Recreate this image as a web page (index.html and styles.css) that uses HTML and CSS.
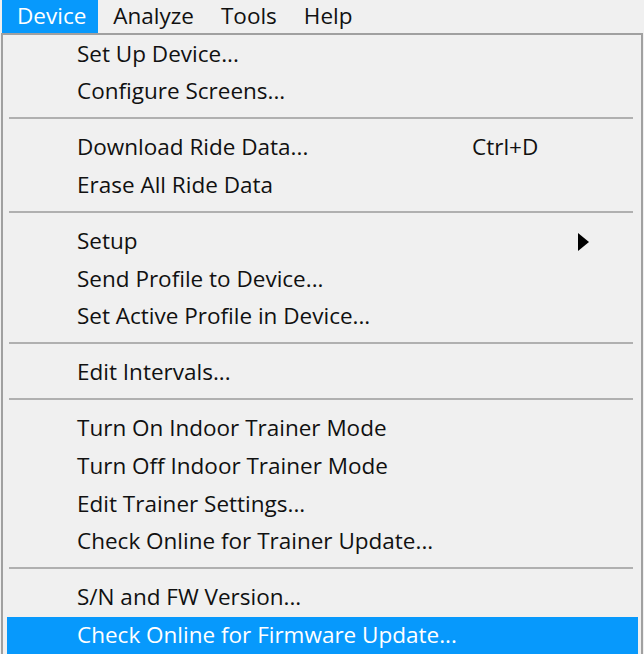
FILE: index.html
```html
<!DOCTYPE html>
<html lang="en">
<head>
  <meta charset="UTF-8" />
  <title>Device menu</title>
  <link rel="stylesheet" href="styles.css">
</head>
<body>

  <!-- Menu bar -->
  <div class="menubar">
    <div class="menubar-item open">Device</div>
    <div class="menubar-item">Analyze</div>
    <div class="menubar-item">Tools</div>
    <div class="menubar-item">Help</div>
  </div>

  <!-- Device dropdown -->
  <div class="menu">
    <div class="item"><span class="label">Set Up Device...</span></div>
    <div class="item"><span class="label">Configure Screens...</span></div>
    <div class="separator"></div>
    <div class="item"><span class="label">Download Ride Data...</span><span class="shortcut">Ctrl+D</span></div>
    <div class="item"><span class="label">Erase All Ride Data</span></div>
    <div class="separator"></div>
    <div class="item"><span class="label">Setup</span><span class="shortcut"></span><span class="arrow"></span></div>
    <div class="item"><span class="label">Send Profile to Device...</span></div>
    <div class="item"><span class="label">Set Active Profile in Device...</span></div>
    <div class="separator"></div>
    <div class="item"><span class="label">Edit Intervals...</span></div>
    <div class="separator"></div>
    <div class="item"><span class="label">Turn On Indoor Trainer Mode</span></div>
    <div class="item"><span class="label">Turn Off Indoor Trainer Mode</span></div>
    <div class="item"><span class="label">Edit Trainer Settings...</span></div>
    <div class="item"><span class="label">Check Online for Trainer Update...</span></div>
    <div class="separator"></div>
    <div class="item"><span class="label">S/N and FW Version...</span></div>
    <div class="item active"><span class="label">Check Online for Firmware Update...</span></div>
  </div>

</body>
</html>
```

FILE: styles.css
```css
* { margin: 0; padding: 0; box-sizing: border-box; }

body {
  background: #f0f0f0;
  color: #111;
  font-family: 'Open Sans', 'Liberation Sans', sans-serif;
  font-size: 22.5px;
  overflow: hidden;
}

/* top bar */
.menubar {
  display: flex;
  height: 33px;
  padding-left: 2px;
}

.menubar-item {
  height: 33px;
  line-height: normal;
  padding: 0 12px 0 15px;
  white-space: nowrap;
}

.menubar-item.open {
  background: #0799fc;
  color: white;
}

/* dropdown panel */
.menu {
  width: 642px;
  margin-left: 1px;
  border: 2px solid #a0a0a0;
  border-bottom: none;
  background: #f0f0f0;
}

.item {
  display: grid;
  grid-template-columns: 395px 106px 11px;
  align-items: center;
  height: 37.7px;
  line-height: 37.7px;
  margin: 0 3px 0 4px;
  padding-left: 70px;
  border-top: 1.5px solid transparent;
  background-clip: padding-box;
  white-space: nowrap;
}

.item .label,
.item .shortcut {
  margin-top: -1.5px;
}

.item.active {
  background-color: #0799fc;
  color: white;
}

.arrow {
  width: 0;
  height: 0;
  border-left: 11px solid #000;
  border-top: 9px solid transparent;
  border-bottom: 9px solid transparent;
}

.separator {
  height: 18.3px;
  padding-top: 7px;
  margin: 0 8px 0 6px;
}

.separator::before {
  content: "";
  display: block;
  height: 2px;
  background: #b0b0b0;
}
```
